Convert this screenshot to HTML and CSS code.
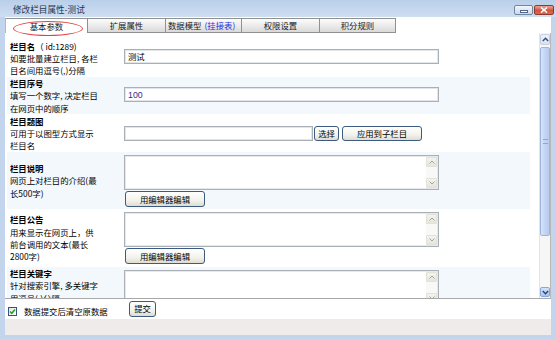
FILE: index.html
```html
<!DOCTYPE html>
<html>
<head>
<meta charset="utf-8">
<link rel="stylesheet" href="styles.css">
</head>
<body>
<div class="window">
  <div class="titlebar">
    <span class="title">修改栏目属性-测试</span>
    <div class="ctrls">
      <span class="btn-min"><i></i></span>
      <span class="btn-close"><svg width="8" height="6" viewBox="0 0 8 6"><path d="M1 0.5 L7 5.5 M7 0.5 L1 5.5" stroke="#fff" stroke-width="1.6"/></svg></span>
    </div>
  </div>
  <div class="client">
    <div class="tabs">
      <div class="tab active w83">基本参数<span class="ring"></span></div>
      <div class="tab w78">扩展属性</div>
      <div class="tab w76 tab3">数据模型 <span class="link">(挂接表)</span></div>
      <div class="tab w78">权限设置</div>
      <div class="tab w76">积分规则</div>
    </div>
    <div class="panel">
      <div class="scrollarea">
        <table class="form">
          <tr class="r1">
            <td class="lbl"><div class="head"><b>栏目名</b>（ id:1289)</div>如要批量建立栏目, 各栏<br>目名间用逗号(,)分隔</td>
            <td class="fld"><input class="txt" value="测试"></td>
          </tr>
          <tr class="r2 alt">
            <td class="lbl"><div class="head"><b>栏目序号</b></div>填写一个数字, 决定栏目<br>在网页中的顺序</td>
            <td class="fld"><input class="txt num" value="100"></td>
          </tr>
          <tr class="r3">
            <td class="lbl"><div class="head"><b>栏目题图</b></div>可用于以图型方式显示<br>栏目名</td>
            <td class="fld"><div class="line"><input class="txt short" value=""><button class="btn b-sel">选择</button><button class="btn b-apply">应用到子栏目</button></div></td>
          </tr>
          <tr class="r4 alt">
            <td class="lbl"><div class="head"><b>栏目说明</b></div>网页上对栏目的介绍(最<br>长500字)</td>
            <td class="fld">
              <div class="ta"><div class="ta-body"></div><div class="ta-sb"><span class="ta-arrow"><svg width="6" height="4" viewBox="0 0 6 4"><path d="M0.5 3.5 L3 1 L5.5 3.5" fill="none" stroke="#a3a39b" stroke-width="1"/></svg></span><span class="ta-arrow"><svg width="6" height="4" viewBox="0 0 6 4"><path d="M0.5 0.5 L3 3 L5.5 0.5" fill="none" stroke="#a3a39b" stroke-width="1"/></svg></span></div></div>
              <button class="btn b-edit">用编辑器编辑</button>
            </td>
          </tr>
          <tr class="r5">
            <td class="lbl"><div class="head"><b>栏目公告</b></div>用来显示在网页上，供<br>前台调用的文本(最长<br>2800字)</td>
            <td class="fld">
              <div class="ta"><div class="ta-body"></div><div class="ta-sb"><span class="ta-arrow"><svg width="6" height="4" viewBox="0 0 6 4"><path d="M0.5 3.5 L3 1 L5.5 3.5" fill="none" stroke="#a3a39b" stroke-width="1"/></svg></span><span class="ta-arrow"><svg width="6" height="4" viewBox="0 0 6 4"><path d="M0.5 0.5 L3 3 L5.5 0.5" fill="none" stroke="#a3a39b" stroke-width="1"/></svg></span></div></div>
              <button class="btn b-edit">用编辑器编辑</button>
            </td>
          </tr>
          <tr class="r6 alt">
            <td class="lbl"><div class="head"><b>栏目关键字</b></div>针对搜索引擎, 多关键字<br>用逗号(,)分隔</td>
            <td class="fld">
              <div class="ta"><div class="ta-body"></div><div class="ta-sb"><span class="ta-arrow"><svg width="6" height="4" viewBox="0 0 6 4"><path d="M0.5 3.5 L3 1 L5.5 3.5" fill="none" stroke="#a3a39b" stroke-width="1"/></svg></span><span class="ta-arrow"><svg width="6" height="4" viewBox="0 0 6 4"><path d="M0.5 0.5 L3 3 L5.5 0.5" fill="none" stroke="#a3a39b" stroke-width="1"/></svg></span></div></div>
            </td>
          </tr>
        </table>
      </div>
      <div class="vscroll">
        <span class="sb-btn up"><svg width="7" height="5" viewBox="0 0 7 5"><path d="M0.8 4 L3.5 1.3 L6.2 4" fill="none" stroke="#3b5378" stroke-width="1.5"/></svg></span>
        <span class="thumb"><i></i></span>
        <span class="sb-fill"></span>
        <span class="sb-btn down"><svg width="7" height="5" viewBox="0 0 7 5"><path d="M0.8 1 L3.5 3.7 L6.2 1" fill="none" stroke="#2c4670" stroke-width="1.5"/></svg></span>
      </div>
    </div>
    <div class="footer">
      <div class="chk-group">
        <span class="chk"><svg width="7" height="7" viewBox="0 0 7 7"><path d="M1 3.5 L2.8 5.3 L6 1.5" fill="none" stroke="#22a022" stroke-width="1.5"/></svg></span>
        <span class="chk-label">数据提交后清空原数据</span>
      </div>
      <button class="btn b-submit">提交</button>
    </div>
    <div class="band"></div>
  </div>
</div>
</body>
</html>
```

FILE: styles.css
```css
* { box-sizing: border-box; }
html, body { margin: 0; padding: 0; }
body {
  width: 556px;
  height: 339px;
  overflow: hidden;
  background: #c2d5ec;
  font-family: "Noto Sans CJK SC", "Liberation Sans", sans-serif;
  font-size: 8.4px;
  color: #000;
}
.window { display: flex; flex-direction: column; height: 339px; }

.titlebar {
  height: 17px;
  display: flex;
  justify-content: space-between;
  align-items: flex-start;
  background: linear-gradient(#b9cfe9, #cfdef1);
  padding: 0 2px 0 13px;
}
.title { font-size: 8.6px; line-height: 18px; color: #1f3452; }
.ctrls { display: flex; gap: 1px; margin-top: 5px; }
.btn-min {
  width: 19px; height: 10px;
  border: 1px solid #71879f;
  border-radius: 2px;
  background: linear-gradient(#f3f6fb, #cbd9ec);
  display: flex; align-items: center; justify-content: center;
}
.btn-min i { display: block; width: 8px; height: 3px; background: #fff; border: 1px solid #506a8c; margin-top: 2px; }
.btn-close {
  width: 20px; height: 10px;
  border: 1px solid #8a3b30;
  border-radius: 2px;
  background: linear-gradient(#eca595, #cf5540 55%, #d96a52);
  display: flex; align-items: center; justify-content: center;
}

.client {
  flex: 1;
  margin: 0 5px 4px 5px;
  background: #fff;
  display: flex;
  flex-direction: column;
}

.tabs { height: 16px; padding-top: 1px; display: flex; }
.tab {
  height: 15px;
  border: 1px solid #8f9090;
  border-left: none;
  background: linear-gradient(#fcfcfc, #e8e8e8 60%, #d9d9d9);
  display: flex; align-items: center; justify-content: center;
  line-height: 13px;
  color: #1a1a1a;
}
.tab.active { background: #fff; border-bottom: none; border-left: 1px solid #b8b8b8; position: relative; }
.w83 { width: 83px; }
.w78 { width: 78px; }
.w76 { width: 76px; }
.tab3 { justify-content: flex-start; padding-left: 2px; align-items: flex-end; }
.tab3 .link { color: #2233dd; margin-left: 3px; }
.ring {
  position: absolute;
  left: 7px; top: 2px;
  width: 70px; height: 15px;
  border: 1px solid #e24444;
  border-radius: 50%;
}

.panel {
  height: 266px;
  display: flex;
  border-bottom: 1px solid #a8a8a8;
  border-right: 1px solid #b8b8b8;
}
.scrollarea { flex: 1; overflow: hidden; padding: 6px 0 0 2px; }

.form { width: 523px; border-collapse: collapse; border-spacing: 0; }
.form td { padding: 0; vertical-align: middle; }
.alt { background: #f3f8fd; }
.lbl { width: 117px; padding-left: 3px !important; line-height: 12.3px; white-space: nowrap; }
.lbl .head b { font-weight: bold; }
.r1 td { height: 38px; }
.r2 td { height: 37px; }
.r3 td { height: 38px; }
.r4 td { height: 57px; }
.r5 td { height: 58px; }
.r6 td { height: 40px; vertical-align: top; }
.r6 .fld { padding-top: 3px; }

.txt {
  display: block;
  width: 315px; height: 15px;
  margin: 0;
  padding: 0 3px;
  border: 1px solid #a9b0b8;
  box-shadow: inset 0 0 0 1px #e2e5e9;
  font-family: "Noto Sans CJK SC", "Liberation Sans", sans-serif;
  font-size: 8.4px;
  color: #000;
  background: #fff;
  outline: none;
}
.txt.num { color: #3a2c86; font-family: "Liberation Sans", sans-serif; font-size: 8.8px; }
.r1 .txt { margin-top: -4px; }
.r2 .txt { margin-top: -2px; }
.line { display: flex; align-items: center; }
.txt.short { width: 189px; margin-top: 1px; }

.btn {
  height: 15px;
  padding: 0;
  margin: 0;
  border: 1px solid #3d5a80;
  border-radius: 3px;
  background: linear-gradient(#ffffff, #f3f2ec 60%, #dedcd2);
  font-family: "Noto Sans CJK SC", "Liberation Sans", sans-serif;
  font-size: 8.4px;
  line-height: 12px;
  color: #000;
}
.b-sel { width: 25px; margin-left: 1px; }
.b-apply { width: 80px; margin-left: 3px; }
.b-edit { display: block; width: 80px; height: 16px; margin: 1px 0 0 1px; }

.ta {
  width: 315px; height: 35px;
  border: 1px solid #a9b0b8;
  box-shadow: inset 0 0 0 1px #e6e8eb;
  background: #fff;
  display: flex;
}
.ta-body { flex: 1; }
.ta-sb {
  width: 11px;
  margin: 1px 1px 1px 0;
  background: #f8f8f6;
  display: flex; flex-direction: column; justify-content: space-between;
}
.ta-arrow {
  height: 10px;
  background: linear-gradient(#f4f4ef, #e6e5dd);
  border: 1px solid #e3e2da;
  border-radius: 1px;
  display: flex; align-items: center; justify-content: center;
}

.vscroll {
  width: 11px;
  display: flex;
  flex-direction: column;
  background: #f6f6f6;
  border-left: 1px solid #e4e4e4;
  padding-top: 1px;
}
.sb-btn {
  height: 11px;
  border: 1px solid #c3cfe3;
  border-radius: 2px;
  background: linear-gradient(#eef3fb, #d6e1f2);
  display: flex; align-items: center; justify-content: center;
}
.sb-btn.down {
  height: 10px;
  margin-bottom: 1px;
  border-color: #8aa8d6;
  background: linear-gradient(#d5e3fb, #a9c3ef);
}
.thumb {
  height: 189px;
  margin-top: 2px;
  border: 1px solid #9db4dd;
  border-radius: 2px;
  background: linear-gradient(90deg, #d7e3f8, #c3d5f5 50%, #b7cbef);
  display: flex; align-items: center; justify-content: center;
}
.thumb i { display: block; width: 5px; height: 5px; border-top: 1px solid #8ca5d2; border-bottom: 1px solid #8ca5d2; }
.sb-fill { flex: 1; }

.footer { height: 20px; display: flex; align-items: center; }
.chk-group { width: 124px; display: flex; align-items: center; padding: 4px 0 0 3px; }
.chk {
  width: 9px; height: 9px;
  border: 1px solid #35557c;
  background: linear-gradient(135deg, #e4e4de, #ffffff);
  display: flex; align-items: center; justify-content: center;
}
.chk-label { margin-left: 7px; }
.b-submit { width: 27px; height: 16px; line-height: 10px; padding-bottom: 3px; }

.band { height: 16px; background: #efebea; }
```
